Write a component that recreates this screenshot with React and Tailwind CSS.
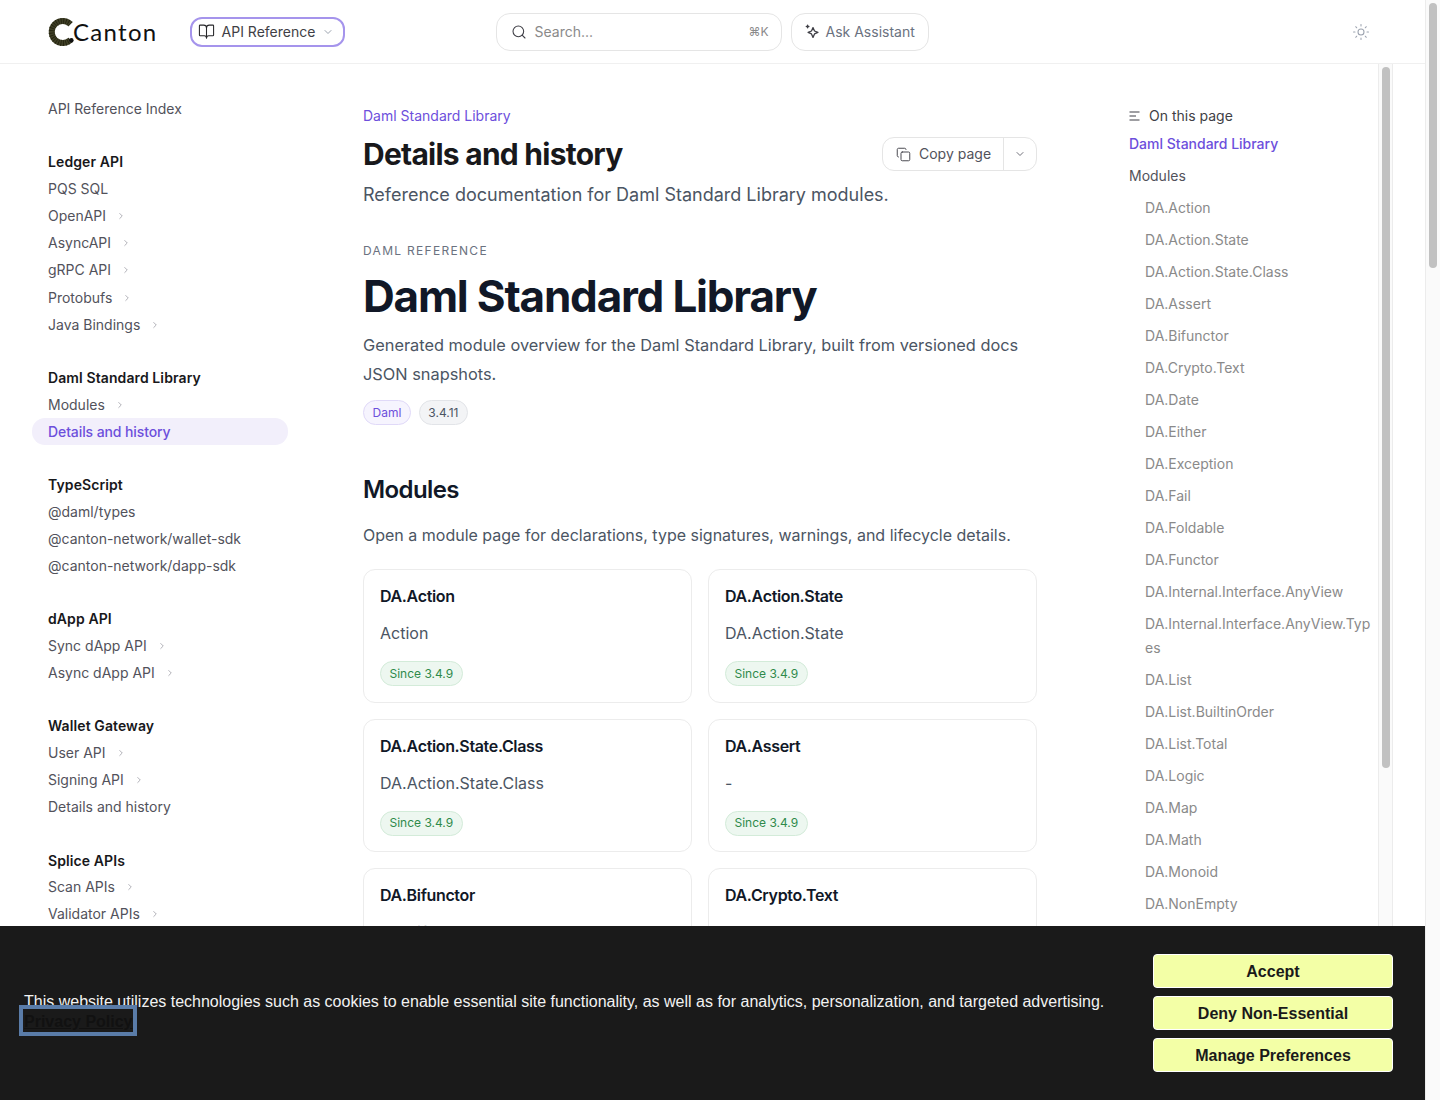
import { BookOpen, ChevronDown, ChevronRight, Copy, Search, Sun } from 'lucide-react';

const sidebarGroups = [
  {
    title: 'Ledger API',
    items: [
      { label: 'PQS SQL' },
      { label: 'OpenAPI', more: true },
      { label: 'AsyncAPI', more: true },
      { label: 'gRPC API', more: true },
      { label: 'Protobufs', more: true },
      { label: 'Java Bindings', more: true },
    ],
  },
  {
    title: 'Daml Standard Library',
    items: [
      { label: 'Modules', more: true },
      { label: 'Details and history', active: true },
    ],
  },
  {
    title: 'TypeScript',
    items: [
      { label: '@daml/types' },
      { label: '@canton-network/wallet-sdk' },
      { label: '@canton-network/dapp-sdk' },
    ],
  },
  {
    title: 'dApp API',
    items: [
      { label: 'Sync dApp API', more: true },
      { label: 'Async dApp API', more: true },
    ],
  },
  {
    title: 'Wallet Gateway',
    items: [
      { label: 'User API', more: true },
      { label: 'Signing API', more: true },
      { label: 'Details and history' },
    ],
  },
  {
    title: 'Splice APIs',
    items: [
      { label: 'Scan APIs', more: true },
      { label: 'Validator APIs', more: true },
    ],
  },
];

const modules = [
  { name: 'DA.Action', text: 'Action' },
  { name: 'DA.Action.State', text: 'DA.Action.State' },
  { name: 'DA.Action.State.Class', text: 'DA.Action.State.Class' },
  { name: 'DA.Assert', text: '-' },
  { name: 'DA.Bifunctor', text: 'DA.Bifunctor' },
  { name: 'DA.Crypto.Text', text: 'DA.Crypto.Text' },
];

const tocItems = [
  'DA.Action',
  'DA.Action.State',
  'DA.Action.State.Class',
  'DA.Assert',
  'DA.Bifunctor',
  'DA.Crypto.Text',
  'DA.Date',
  'DA.Either',
  'DA.Exception',
  'DA.Fail',
  'DA.Foldable',
  'DA.Functor',
  'DA.Internal.Interface.AnyView',
  'DA.Internal.Interface.AnyView.Types',
  'DA.List',
  'DA.List.BuiltinOrder',
  'DA.List.Total',
  'DA.Logic',
  'DA.Map',
  'DA.Math',
  'DA.Monoid',
  'DA.NonEmpty',
];

function Logo() {
  return (
    <div className="flex items-center">
      <svg width="28" height="28" viewBox="0 0 28 28" fill="none">
        <path d="M22.5 6.2A11 11 0 1 0 22.5 21.8" stroke="#3f3f26" strokeWidth="6" />
        <path d="M22.5 6.2A11 11 0 1 0 22.5 21.8" stroke="#22220f" strokeWidth="6" strokeDasharray="0.8 1.6" />
        <circle cx="23.4" cy="22.2" r="2.2" fill="#111" />
      </svg>
      <span className="ml-[-3px] font-['Lato',sans-serif] text-[24px] font-normal leading-none tracking-[1.3px] text-[#111]">
        Canton
      </span>
    </div>
  );
}

function Header() {
  return (
    <header className="flex h-16 shrink-0 items-center border-b border-[#f0f0f0] pl-12 bg-white">
      <Logo />
      <button className="ml-[32px] flex h-[30px] w-[155px] items-center rounded-xl border-2 border-[#a594ec] pl-[6px] text-sm text-[#3f3f46]">
        <BookOpen size={17} strokeWidth={1.5} className="text-[#27272a]" />
        <span className="ml-[7px]">API Reference</span>
        <ChevronDown size={12} className="ml-[7px] text-[#9ca3af]" />
      </button>
      <div className="ml-[151px] flex h-[38px] w-[286px] items-center rounded-[14px] border border-[#e5e5e5] pl-[14px] pr-3">
        <Search size={16} strokeWidth={1.6} className="text-[#3f3f46]" />
        <span className="ml-2 text-sm text-[#8a8a8a]">Search...</span>
        <span className="ml-auto text-xs text-[#8a8a8a]">⌘K</span>
      </div>
      <div className="ml-[9px] flex h-[38px] w-[138px] items-center rounded-[14px] border border-[#e5e5e5] pl-[13px]">
        <svg width="16" height="16" viewBox="0 0 16 16" fill="none" stroke="#3f3f46" strokeWidth="1.3" strokeLinejoin="round" strokeLinecap="round">
          <path d="M8 3.6 9.5 7l3.4 1.4L9.5 9.9 8 13.4 6.5 9.9 3.1 8.4 6.5 7Z" />
          <path d="M2.6 1.2v2.6M1.3 2.5h2.6" />
        </svg>
        <span className="ml-[5px] text-sm text-[#6b7280]">Ask Assistant</span>
      </div>
      <Sun size={18} strokeWidth={1.4} className="ml-[423px] text-[#9ca3af]" />
    </header>
  );
}

function SidebarItem({ item }) {
  if (item.active) {
    return (
      <div className="-ml-4 flex h-[27px] items-center rounded-[13px] bg-[#f2effb] pl-4 font-medium tracking-[-0.1px] text-[#6d4fdc]">
        {item.label}
      </div>
    );
  }
  return (
    <div className="flex h-[27.2px] items-center text-[#52525b]">
      {item.label}
      {item.more && <ChevronRight size={10} strokeWidth={2} className="ml-[10px] text-[#a1a1aa]" />}
    </div>
  );
}

function Sidebar() {
  return (
    <aside className="flex w-[288px] shrink-0 flex-col pl-12 pt-[31px] text-sm">
      <div className="mb-[0.6px] flex h-[27px] items-center text-[#52525b]">API Reference Index</div>
      {sidebarGroups.map((group) => (
        <div key={group.title} className="mt-[26.7px]">
          <div className="flex h-[26px] items-center font-semibold tracking-[0.1px] text-[#18181b]">{group.title}</div>
          {group.items.map((item) => (
            <SidebarItem key={item.label} item={item} />
          ))}
        </div>
      ))}
    </aside>
  );
}

function ModuleCard({ module }) {
  return (
    <div className="h-[133.5px] rounded-xl border border-[#ececec] bg-white px-4 pt-[14px]">
      <div className="text-base font-semibold leading-6 tracking-[-0.35px] text-[#111827]">{module.name}</div>
      <div className="mt-[13px] text-base leading-6 text-[#4b5563]">{module.text}</div>
      <span className="mt-[16px] inline-flex h-[25px] items-center rounded-full border border-[#d3ebd9] bg-[#edf7f0] px-[8.5px] text-xs text-[#2f8a4b]">
        Since 3.4.9
      </span>
    </div>
  );
}

function Content() {
  return (
    <main className="ml-[75px] w-[674px] shrink-0 pt-[42px]">
      <div className="text-sm leading-5 text-[#6d4fdc]">Daml Standard Library</div>
      <div className="mt-[10px] flex h-[36px] items-center justify-between">
        <h1 className="text-[30px] font-bold leading-9 tracking-[-0.75px] text-[#18181b]">Details and history</h1>
        <div className="flex h-[34px] w-[155px] items-center rounded-xl border border-[#e5e5e5] text-sm text-[#52525b]">
          <div className="flex h-full w-[121px] items-center border-r border-[#e5e5e5] pl-[13px]">
            <Copy size={15} strokeWidth={1.5} className="text-[#3f3f46]" />
            <span className="ml-2">Copy page</span>
          </div>
          <ChevronDown size={12} className="ml-[10px] text-[#71717a]" />
        </div>
      </div>
      <p className="mt-[9px] text-lg leading-7 text-[#4b5563]">
        Reference documentation for Daml Standard Library modules.
      </p>
      <div className="mt-[34px] text-xs uppercase leading-4 tracking-[1.3px] text-[#6b7280]">Daml reference</div>
      <h2 className="mt-[9px] text-[44px] font-bold leading-[56px] tracking-[-1.2px] text-[#111827]">Daml Standard Library</h2>
      <p className="mt-[7px] text-[16.35px] leading-[29px] text-[#4b5563]">
        Generated module overview for the Daml Standard Library, built from versioned docs JSON snapshots.
      </p>
      <div className="mt-[11px] flex gap-2">
        <span className="flex h-[25px] items-center rounded-full border border-[#e0d9f8] bg-[#f6f4fe] px-[8.5px] text-xs text-[#6d4fdc]">Daml</span>
        <span className="flex h-[25px] items-center rounded-full border border-[#e2e4e8] bg-[#f3f4f6] px-[8.5px] text-xs text-[#4b5563]">3.4.11</span>
      </div>
      <h3 className="mt-[47px] text-2xl font-semibold leading-[36px] tracking-[-0.6px] text-[#111827]">Modules</h3>
      <p className="mt-[15px] text-base leading-6 text-[#4b5563]">
        Open a module page for declarations, type signatures, warnings, and lifecycle details.
      </p>
      <div className="mt-[22px] grid grid-cols-2 gap-4">
        {modules.map((module) => (
          <ModuleCard key={module.name} module={module} />
        ))}
      </div>
    </main>
  );
}

function Toc() {
  return (
    <aside className="flex w-[300px] shrink-0 pl-[92px]">
      <div className="w-[249px] shrink-0 pt-[42px] text-sm">
        <div className="flex h-5 items-center font-medium text-[#3f3f46]">
          <svg width="12" height="10" viewBox="0 0 12 10" fill="none" stroke="#3f3f46" strokeWidth="1.2">
            <path d="M0.5 1h10M0.5 5h6.5M0.5 9h10" />
          </svg>
          <span className="ml-2 font-normal">On this page</span>
        </div>
        <div className="mt-[6px] leading-6 font-medium text-[#6d4fdc]">Daml Standard Library</div>
        <div className="mt-2 leading-6 text-[#52525b]">Modules</div>
        {tocItems.map((item) => (
          <div key={item} className="mt-2 pl-4 leading-6 break-all text-[#8a8a8a]">
            {item}
          </div>
        ))}
      </div>
      <div className="h-full w-[15px] shrink-0 border-x border-[#ececec] bg-[#fafafa] px-[3px] pt-[3px]">
        <div className="h-[701px] w-[8px] rounded-full bg-[#c1c1c1]" />
      </div>
    </aside>
  );
}

function CookieBanner() {
  return (
    <div className="absolute inset-x-0 bottom-0 flex h-[174px] items-start bg-[#1a1a1a] pl-6 pr-8 pt-7 font-['Liberation_Sans',sans-serif] text-base">
      <div className="flex-1 pt-[38px] leading-[19px] text-[#f2f2f2]">
        <p>This website utilizes technologies such as cookies to enable essential site functionality, as well as for analytics, personalization, and targeted advertising.</p>
        <a className="-ml-px -mt-[2px] block w-fit pb-px pl-px pt-[3px] font-bold text-[#111] underline outline-4 outline-[#5a7ca8]">Privacy Policy</a>
      </div>
      <div className="flex w-[240px] shrink-0 flex-col gap-2">
        {['Accept', 'Deny Non-Essential', 'Manage Preferences'].map((label) => (
          <button key={label} className="h-[34px] rounded border border-white bg-[#f3ffa6] pt-[2px] font-bold text-[#1a1a1a]">
            {label}
          </button>
        ))}
      </div>
    </div>
  );
}

export default function App() {
  return (
    <div className="flex h-[1100px] overflow-hidden bg-white font-['Inter',sans-serif]">
      <div className="relative flex w-[1425px] shrink-0 flex-col">
        <Header />
        <div className="flex min-h-0 flex-1">
          <Sidebar />
          <Content />
          <Toc />
        </div>
        <CookieBanner />
      </div>
      <div className="w-[15px] shrink-0 border-l border-[#ececec] bg-[#fafafa] px-[3px] pt-[3px]">
        <div className="h-[265px] w-[8px] rounded-full bg-[#c1c1c1]" />
      </div>
    </div>
  );
}
